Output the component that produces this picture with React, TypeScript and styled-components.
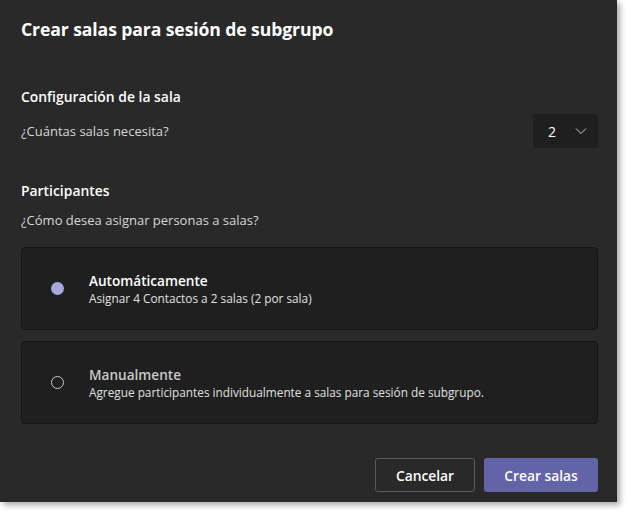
import React from 'react';
import styled, { createGlobalStyle } from 'styled-components';

const GlobalStyle = createGlobalStyle`
  html, body {
    margin: 0;
    padding: 0;
    background: #ffffff;
  }
  body {
    font-family: 'Open Sans', 'Noto Sans', sans-serif;
  }
`;

const Page = styled.div`
  width: 626px;
  height: 511px;
  background: #ffffff;
`;

const Dialog = styled.div`
  width: 617px;
  height: 502px;
  box-sizing: border-box;
  background: #292929;
  box-shadow: 3px 3px 6px rgba(0, 0, 0, 0.35);
  padding: 15px 19px 0 21px;
  display: flex;
  flex-direction: column;
  color: #ffffff;
`;

const Title = styled.h1`
  margin: 0;
  font-size: 17.6px;
  font-weight: 700;
  line-height: 28px;
  letter-spacing: -0.1px;
`;

const SectionTitle = styled.h2<{ $top: number }>`
  margin: ${p => p.$top}px 0 0;
  font-size: 13.9px;
  font-weight: 600;
  line-height: 20px;
`;

const Question = styled.p<{ $top?: number }>`
  margin: ${p => p.$top ?? 0}px 0 0;
  font-size: 13px;
  font-weight: 400;
  line-height: 20px;
  color: #d6d6d6;
`;

const QuestionRow = styled.div`
  display: flex;
  align-items: center;
  justify-content: space-between;
  margin-top: 7px;
`;

const Select = styled.button`
  width: 65px;
  height: 34px;
  border: none;
  border-radius: 3px;
  background: #1f1f1f;
  color: #ffffff;
  font-family: inherit;
  font-size: 14px;
  font-weight: 400;
  display: flex;
  align-items: center;
  justify-content: space-between;
  padding: 0 10px 0 15px;
  box-sizing: border-box;
`;

const Options = styled.div`
  display: flex;
  flex-direction: column;
  gap: 11px;
  margin-top: 17px;
`;

const Card = styled.div`
  height: 83px;
  box-sizing: border-box;
  background: #1f1f1f;
  border: 1px solid #151515;
  border-radius: 4px;
  display: flex;
  align-items: center;
  padding-left: 29px;
`;

const Radio = styled.span<{ $checked: boolean }>`
  width: 13px;
  height: 13px;
  border-radius: 50%;
  box-sizing: border-box;
  flex-shrink: 0;
  background: ${p => (p.$checked ? '#a6a7dc' : 'transparent')};
  border: ${p => (p.$checked ? 'none' : '1.5px solid #c8c8c8')};
`;

const OptionText = styled.div`
  margin-left: 25px;
  display: flex;
  flex-direction: column;
`;

const OptionTitle = styled.div<{ $dim: boolean }>`
  font-size: 13.6px;
  font-weight: 600;
  line-height: 19px;
  color: ${p => (p.$dim ? '#c8c8c8' : '#ffffff')};
`;

const OptionSub = styled.div`
  font-size: 11.8px;
  line-height: 17px;
  color: #e0e0e0;
`;

const Footer = styled.div`
  display: flex;
  justify-content: flex-end;
  gap: 9px;
  margin-top: 34px;
`;

const Button = styled.button<{ $primary?: boolean }>`
  height: 34px;
  box-sizing: border-box;
  border-radius: 3px;
  font-family: inherit;
  font-size: 13.8px;
  font-weight: 600;
  color: #ffffff;
  background: ${p => (p.$primary ? '#6264a7' : 'transparent')};
  border: ${p => (p.$primary ? 'none' : '1px solid #5a5a5a')};
  width: ${p => (p.$primary ? '114px' : '100px')};
`;

const Chevron = () => (
  <svg width="14" height="14" viewBox="0 0 14 14" fill="none">
    <path d="M2 4.5 L7 9.5 L12 4.5" stroke="#c8c8c8" strokeWidth="1" />
  </svg>
);

export default function App() {
  return (
    <Page>
      <GlobalStyle />
      <Dialog>
        <Title>Crear salas para sesión de subgrupo</Title>
        <SectionTitle $top={44}>Configuración de la sala</SectionTitle>
        <QuestionRow>
          <Question>¿Cuántas salas necesita?</Question>
          <Select>
            2
            <Chevron />
          </Select>
        </QuestionRow>
        <SectionTitle $top={33}>Participantes</SectionTitle>
        <Question $top={9}>¿Cómo desea asignar personas a salas?</Question>
        <Options>
          <Card>
            <Radio $checked />
            <OptionText>
              <OptionTitle $dim={false}>Automáticamente</OptionTitle>
              <OptionSub>Asignar 4 Contactos a 2 salas (2 por sala)</OptionSub>
            </OptionText>
          </Card>
          <Card>
            <Radio $checked={false} />
            <OptionText>
              <OptionTitle $dim>Manualmente</OptionTitle>
              <OptionSub>Agregue participantes individualmente a salas para sesión de subgrupo.</OptionSub>
            </OptionText>
          </Card>
        </Options>
        <Footer>
          <Button>Cancelar</Button>
          <Button $primary>Crear salas</Button>
        </Footer>
      </Dialog>
    </Page>
  );
}
